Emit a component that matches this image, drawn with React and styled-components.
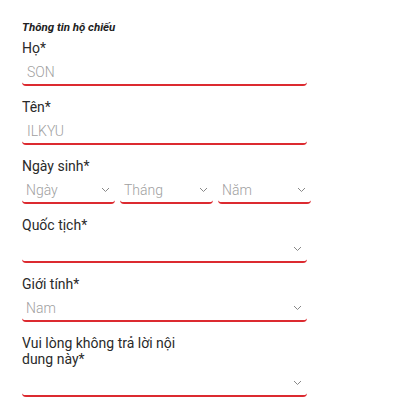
import styled, { createGlobalStyle } from "styled-components";

const GlobalStyle = createGlobalStyle`
  body {
    margin: 0;
    background: #fff;
    font-family: Roboto, "Noto Sans", sans-serif;
  }
`;

const Form = styled.div`
  padding: 20px 0 0 22px;
  width: 285px;
`;

const Title = styled.div`
  font-size: 11.5px;
  line-height: 14px;
  font-weight: 700;
  font-style: italic;
  color: #222;
  margin-bottom: 6px;
`;

const Field = styled.div`
  margin-bottom: 13px;
  width: ${(p) => p.$width || "285px"};
`;

const Label = styled.div`
  font-size: 14px;
  line-height: 16px;
  color: #2a2a2a;
  max-width: ${(p) => p.$max || "none"};
`;

const Box = styled.div`
  box-sizing: border-box;
  height: 30px;
  display: flex;
  align-items: center;
  justify-content: space-between;
  padding: 3px 5px 0 4px;
  border-bottom: 2px solid #dc2a30;
  border-radius: 0 0 4px 4px;
  flex: ${(p) => (p.$grow ? 1 : "none")};
`;

const Value = styled.span`
  font-size: 14px;
  font-weight: 300;
  color: #a0a0a0;
  padding-left: ${(p) => (p.$indent ? "1px" : "0")};
`;

const Row = styled.div`
  display: flex;
  gap: 5px;
`;

const Chevron = () => (
  <svg width="9" height="6" viewBox="0 0 9 6" fill="none">
    <path d="M1 1l3.5 3.5L8 1" stroke="#888" strokeWidth="1" />
  </svg>
);

const Select = ({ value, grow }) => (
  <Box $grow={grow}>
    <Value>{value}</Value>
    <Chevron />
  </Box>
);

export default function App() {
  return (
    <>
      <GlobalStyle />
      <Form>
        <Title>Thông tin hộ chiếu</Title>
        <Field>
          <Label>Họ*</Label>
          <Box>
            <Value $indent>SON</Value>
          </Box>
        </Field>
        <Field>
          <Label>Tên*</Label>
          <Box>
            <Value $indent>ILKYU</Value>
          </Box>
        </Field>
        <Field $width="289px">
          <Label>Ngày sinh*</Label>
          <Row>
            <Select value="Ngày" grow />
            <Select value="Tháng" grow />
            <Select value="Năm" grow />
          </Row>
        </Field>
        <Field>
          <Label>Quốc tịch*</Label>
          <Select value="" />
        </Field>
        <Field>
          <Label>Giới tính*</Label>
          <Select value="Nam" />
        </Field>
        <Field>
          <Label $max="170px">Vui lòng không trả lời nội dung này*</Label>
          <Select value="" />
        </Field>
      </Form>
    </>
  );
}
